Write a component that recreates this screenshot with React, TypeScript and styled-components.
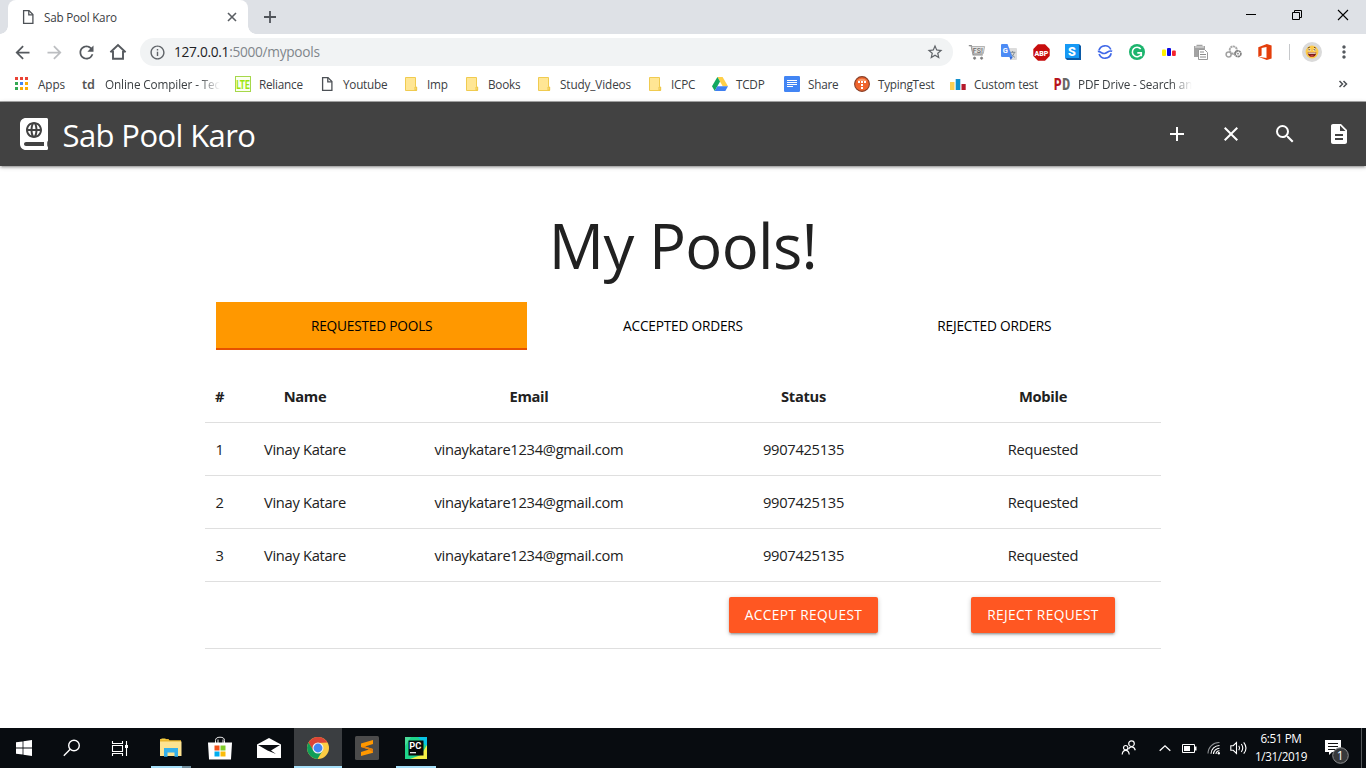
import React from "react";
import styled, { createGlobalStyle, css } from "styled-components";
import { MdAdd, MdArrowBack, MdArrowForward, MdClose, MdDescription, MdInfoOutline, MdMoreVert, MdRefresh, MdSearch, MdStarBorder } from "react-icons/md";
import { FaAtlas } from "react-icons/fa";

const GlobalStyle = createGlobalStyle`
  * { box-sizing: border-box; }
  body { margin: 0; background: #fff; font-family: "Open Sans", "Noto Sans", sans-serif; overflow: hidden; }
  svg { display: block; flex: none; overflow: visible; }
`;

const Screen = styled.div`
  width: 1366px;
  height: 768px;
  display: flex;
  flex-direction: column;
  overflow: hidden;
`;

/* ---------- browser chrome ---------- */

const TabStrip = styled.div`
  height: 34px;
  background: #dee1e6;
  display: flex;
  align-items: flex-start;
  padding-left: 8px;
  flex: none;
`;

const BrowserTab = styled.div`
  position: relative;
  width: 240px;
  height: 34px;
  background: #fff;
  border-radius: 8px 8px 0 0;
  display: flex;
  align-items: center;
  padding: 0 10px 0 12px;
  color: #3c4043;
  font-size: 11.7px;
  letter-spacing: -0.22px;
  &::before, &::after {
    content: "";
    position: absolute;
    bottom: 0;
    width: 8px;
    height: 8px;
  }
  &::before { left: -8px; background: radial-gradient(circle at 0 0, transparent 7.5px, #fff 8px); }
  &::after { right: -8px; background: radial-gradient(circle at 100% 0, transparent 7.5px, #fff 8px); }
`;

const TabTitle = styled.span`
  flex: 1;
  margin: -1px 0 0 8px;
  line-height: 16px;
`;

const NewTab = styled.div`
  margin: 10px 0 0 15px;
`;

const WindowButtons = styled.div`
  margin-left: auto;
  display: flex;
  height: 29px;
`;

const WindowButton = styled.div`
  width: 46px;
  display: flex;
  align-items: center;
  justify-content: center;
`;

const Toolbar = styled.div`
  height: 36px;
  flex: none;
  display: flex;
  align-items: center;
  padding: 0 6px;
  background: #fff;
`;

const ToolButton = styled.div<{ $faded?: boolean }>`
  width: 32px;
  height: 28px;
  display: flex;
  align-items: center;
  justify-content: center;
  color: ${(p) => (p.$faded ? "#bcbec1" : "#55595e")};
`;

const Omnibox = styled.div`
  margin-left: 6px;
  width: 813px;
  height: 28px;
  border-radius: 14px;
  background: #f1f3f4;
  display: flex;
  align-items: center;
  padding: 0 9px 0 9px;
  color: #5f6368;
`;

const Url = styled.div`
  flex: 1;
  margin-left: 8px;
  font-size: 13.7px;
  letter-spacing: -0.29px;
  line-height: 20px;
  color: #80868b;
  b { font-weight: 400; color: #202124; }
`;

const Extensions = styled.div`
  display: flex;
  align-items: center;
  margin-left: 8px;
`;

const ToolbarRule = styled.div`
  width: 1px;
  height: 16px;
  margin: 0 8px 0 8px;
  background: #c6c8cb;
`;

const Avatar = styled.div`
  width: 20px;
  height: 20px;
  margin: 0 6px 0 4px;
  border-radius: 50%;
  background: #dadada;
  display: flex;
  align-items: center;
  justify-content: center;
`;

const Bookmarks = styled.div`
  height: 32px;
  flex: none;
  display: flex;
  align-items: flex-start;
  padding: 6px 18px 0 14px;
  border-bottom: 1px solid #a9a9a9;
  color: #3c4043;
`;

const Bookmark = styled.div<{ $w: number }>`
  width: ${(p) => p.$w}px;
  height: 16px;
  display: flex;
  align-items: center;
  gap: 8px;
`;

const BookmarkLabel = styled.span<{ $fade?: number; $track?: number }>`
  margin-top: -1px;
  font-size: 11.75px;
  letter-spacing: ${(p) => p.$track ?? -0.25}px;
  line-height: 16px;
  white-space: nowrap;
  ${(p) =>
    p.$fade &&
    css`
      width: ${p.$fade}px;
      mask-image: linear-gradient(to right, #000 82%, transparent 100%);
    `}
`;

const Overflow = styled.div`
  margin-left: auto;
`;

/* ---------- page ---------- */

const Navbar = styled.nav`
  position: relative;
  height: 64px;
  flex: none;
  background: #424242;
  color: #fff;
  display: flex;
  align-items: center;
  padding: 0 15px 0 20px;
  box-shadow: 0 2px 2px 0 rgba(0, 0, 0, 0.14), 0 3px 1px -2px rgba(0, 0, 0, 0.12), 0 1px 5px 0 rgba(0, 0, 0, 0.2);
`;

const AtlasIcon = styled(FaAtlas)`
  width: 28px;
  height: 32px;
`;

const Brand = styled.div`
  display: flex;
  align-items: center;
  font-size: 31px;
  letter-spacing: -0.6px;
  line-height: 64px;
  span { margin: 1px 0 0 14.5px; }
`;

const NavActions = styled.div`
  margin-left: auto;
  display: flex;
  gap: 30px;
`;

const Main = styled.main`
  flex: 1;
  width: 956px;
  margin: 0 auto;
  padding-top: 38px;
  color: #212121;
`;

const Title = styled.h1`
  margin: 0;
  height: 98px;
  text-align: center;
  font-size: 61.5px;
  font-weight: 400;
  letter-spacing: -0.65px;
  line-height: 82px;
`;

const Tabs = styled.div`
  display: grid;
  grid-template-columns: repeat(3, 1fr);
  height: 48px;
  margin: 0 11px;
`;

const Tab = styled.div<{ $active?: boolean }>`
  height: 48px;
  line-height: 48px;
  text-align: center;
  font-size: 13.7px;
  letter-spacing: -0.21px;
  color: #000;
  background: ${(p) => (p.$active ? "#ff9800" : "transparent")};
  box-shadow: ${(p) => (p.$active ? "inset 0 -2px #e65100" : "none")};
`;

const Table = styled.div`
  margin-top: 20px;
`;

const Row = styled.div<{ $head?: boolean; $h?: number }>`
  height: ${(p) => p.$h ?? 53}px;
  display: grid;
  grid-template-columns: 29px 142px 306px 243px 236px;
  align-items: center;
  justify-items: center;
  border-bottom: 1px solid #dfdfdf;
  font-size: 14.7px;
  font-weight: ${(p) => (p.$head ? 700 : 400)};
  letter-spacing: -0.3px;
  line-height: 22px;
`;

const ActionButton = styled.button`
  height: 36px;
  padding: 0 16px;
  border: 0;
  border-radius: 2px;
  background: #ff5722;
  color: #fff;
  font: 400 13.7px/36px "Open Sans", "Noto Sans", sans-serif;
  letter-spacing: 0.37px;
  white-space: nowrap;
  box-shadow: 0 2px 2px 0 rgba(0, 0, 0, 0.14), 0 3px 1px -2px rgba(0, 0, 0, 0.12), 0 1px 5px 0 rgba(0, 0, 0, 0.2);
`;

/* ---------- taskbar ---------- */

const Taskbar = styled.div`
  height: 40px;
  flex: none;
  display: flex;
  background: #080c10;
  color: #fff;
`;

const TaskGroup = styled.div<{ $gap?: number; $left?: number }>`
  display: flex;
  gap: ${(p) => p.$gap ?? 0}px;
  margin-left: ${(p) => p.$left ?? 0}px;
`;

const Task = styled.div<{ $focused?: boolean; $bar?: string }>`
  width: 48px;
  height: 40px;
  display: flex;
  align-items: center;
  justify-content: center;
  background: ${(p) => (p.$focused ? "#3b3e41" : "transparent")};
  ${(p) =>
    p.$bar &&
    css`
      background-image: ${p.$bar};
      background-size: ${p.$focused ? "48px" : "40px"} 2px;
      background-position: center bottom;
      background-repeat: no-repeat;
    `}
`;

const Tray = styled.div`
  margin-left: auto;
  display: flex;
  align-items: center;
`;

const TraySlot = styled.div<{ $w: number }>`
  width: ${(p) => p.$w}px;
  display: flex;
  justify-content: center;
`;

const BadgeSlot = styled(TraySlot)`
  padding: 6px 0 0 1px;
`;

const Clock = styled.div`
  width: 60px;
  height: 38px;
  text-align: center;
  font-size: 11.7px;
  letter-spacing: -0.38px;
  line-height: 18px;
`;

const ShowDesktop = styled.div`
  width: 5px;
  height: 40px;
  border-left: 1px solid #53575a;
`;

/* ---------- icons ---------- */

const PageIcon = () => (
  <svg width="16" height="16" viewBox="0 0 16 16" fill="none" stroke="#4d5156" strokeWidth="1.3">
    <path d="M3.6 1.6H9l3.9 4v8.8H3.6z" />
    <path d="M8.8 1.8v4h4" />
  </svg>
);

const HomeIcon = () => (
  <svg width="18" height="18" viewBox="0 0 18 18" fill="none" stroke="currentColor" strokeWidth="1.9">
    <path d="M1.4 9.3 9 2l7.6 7.3M4 8v7.8h10V8" />
  </svg>
);

const FolderIcon = () => (
  <svg width="16" height="16" viewBox="0 0 16 16">
    <path d="M2.5 1.5h10v9l1 1v3h-11z" fill="#ffe694" stroke="#f0cb50" />
    <path d="M12 14v-3h1.7v3.3z" fill="#ffe694" stroke="#ecc33d" strokeWidth=".9" />
  </svg>
);

const AppsIcon = () => (
  <svg width="16" height="16" viewBox="0 0 16 16">
    {["#ea4335", "#ea4335", "#ea4335", "#34a853", "#4285f4", "#fbac05", "#34a853", "#fbac05", "#fbac05"].map((c, i) => (
      <rect key={i} x={1 + (i % 3) * 5} y={1 + Math.floor(i / 3) * 5} width="3" height="3" fill={c} />
    ))}
  </svg>
);

const TdIcon = () => (
  <svg width="16" height="16" viewBox="0 0 16 16">
    <text x="1" y="13" fontFamily="Noto Sans, sans-serif" fontWeight="600" fontSize="13" textLength="13" lengthAdjust="spacingAndGlyphs" fill="#555">td</text>
  </svg>
);

const LteIcon = () => (
  <svg width="16" height="16" viewBox="0 0 16 16">
    <rect x=".5" y=".5" width="15" height="15" fill="#fbfff0" stroke="#a6d84a" />
    <text x="1.2" y="12.8" fontFamily="Roboto, sans-serif" fontWeight="700" fontSize="13" textLength="13.6" lengthAdjust="spacingAndGlyphs" fill="#9be50c">LTE</text>
  </svg>
);

const DriveIcon = () => (
  <svg width="16" height="16" viewBox="0 0 16 16">
    <path d="M5.4 1h5.2L16 10.2h-5.3z" fill="#ffcf48" />
    <path d="M5.4 1 8 5.6 2.7 14.9 0 10.2z" fill="#11a861" />
    <path d="M5.3 10.2H16l-2.7 4.7H2.7z" fill="#3f7ff0" />
  </svg>
);

const DocsIcon = () => (
  <svg width="16" height="16" viewBox="0 0 16 16">
    <rect width="16" height="16" rx="1.2" fill="#4285f4" />
    <path d="M3 4.5h10M3 6.5h10M3 8.5h10M3 10.5h6" stroke="#fff" />
  </svg>
);

const TypingIcon = () => (
  <svg width="16" height="16" viewBox="0 0 16 16">
    <circle cx="8" cy="8" r="7.4" fill="#f0642c" stroke="#86402a" strokeWidth="1.1" />
    <path d="M3 5a6 5 0 0 1 10 0z" fill="#f89a6a" />
    <path d="M4 5h2v2H4zM7 5h2v2H7zM10 5h2v2h-2zM7 8h2v2H7zM7 11h2v2H7z" fill="#fff" />
  </svg>
);

const BarsIcon = () => (
  <svg width="16" height="16" viewBox="0 0 16 16">
    <rect y="6" width="4.5" height="8" fill="#ffcf52" />
    <rect x="5.7" y="3" width="4.6" height="11" fill="#1290cc" />
    <rect x="11.5" y="8" width="4.2" height="6" fill="#b51a2b" />
  </svg>
);

const PdIcon = () => (
  <svg width="16" height="16" viewBox="0 0 16 16" fontFamily="Roboto, sans-serif" fontWeight="900" fontSize="16">
    <text x="0" y="13.8" textLength="7.6" lengthAdjust="spacingAndGlyphs" fill="#b8141e">P</text>
    <text x="8.2" y="13.8" textLength="7.8" lengthAdjust="spacingAndGlyphs" fill="#666">D</text>
  </svg>
);

const CartIcon = () => (
  <svg width="18" height="18" viewBox="0 0 18 18" fill="none" stroke="#8d8d8d">
    <path d="M.8 2.6h2.4l2 9.3h9.6" strokeWidth="1.4" />
    <path d="M3.6 3.5h13l-1.3 7H5z" fill="#e2e2e2" stroke="#a5a5a5" strokeWidth=".8" />
    <text x="4.8" y="9.7" fontFamily="Roboto, sans-serif" fontSize="7" fontWeight="500" textLength="10" lengthAdjust="spacingAndGlyphs" fill="#6c6c6c" stroke="none">FS!</text>
    <circle cx="6.6" cy="15.2" r="1.1" fill="#777" />
    <circle cx="13.6" cy="15.2" r="1.1" fill="#777" />
  </svg>
);

const TranslateIcon = () => (
  <svg width="16" height="16" viewBox="0 0 16 16">
    <path d="M6.5 4H15q1 0 1 1v10q0 1-1 1H9.8z" fill="#dcdcdc" />
    <path d="M8.8 8.3h5.6M11.6 7v1.3M9.6 13.4c2-1 3.3-2.7 3.7-5M10.2 9.6c.7 1.7 2 2.9 3.7 3.7" fill="none" stroke="#7b8790" strokeWidth=".9" />
    <path d="M9.7 16 8.4 12.8h3.5z" fill="#3367d6" />
    <path d="M1 0h5.5l4.8 12.9H1q-1 0-1-1V1q0-1 1-1z" fill="#4c8bf5" />
    <text x="1.7" y="9" fontFamily="Roboto, sans-serif" fontWeight="700" fontSize="7.5" fill="#fff">G</text>
  </svg>
);

const AbpIcon = () => (
  <svg width="17" height="17" viewBox="0 0 17 17">
    <path d="M5 .3h7L16.7 5v7L12 16.7H5L.3 12V5z" fill="#c70d0d" />
    <text x="1.6" y="11.5" fontFamily="Roboto, sans-serif" fontWeight="900" fontSize="8" textLength="13.8" lengthAdjust="spacingAndGlyphs" fill="#fff">ABP</text>
  </svg>
);

const SIcon = () => (
  <svg width="16" height="16" viewBox="0 0 16 16">
    <path d="M0 0h14l2 2v14H2l-2-2z" fill="#0b5aa6" />
    <rect width="14" height="14" fill="#1699f5" />
    <text x="3" y="11.5" fontFamily="Roboto, sans-serif" fontWeight="900" fontSize="12.5" fill="#fff">S</text>
  </svg>
);

const WaveIcon = () => (
  <svg width="16" height="16" viewBox="0 0 16 16" fill="none" stroke="#4169e8" strokeWidth="1.7">
    <path d="M2 6.3A6.3 6.3 0 0 1 13.8 5.5M14.2 9.3A6.3 6.3 0 0 1 2.1 10" />
    <path d="M.8 7.4C3.3 7 4.8 9.8 7.5 9.5S11.5 6 15.2 7.2" />
  </svg>
);

const GrammarlyIcon = () => (
  <svg width="16" height="16" viewBox="0 0 16 16">
    <circle cx="8" cy="8" r="8" fill="#1cb46d" />
    <path d="M11.7 5A4.7 4.7 0 1 0 12.3 10M8.3 8.9h4v3.3" fill="none" stroke="#fff" strokeWidth="1.6" />
  </svg>
);

const PillsIcon = () => (
  <svg width="16" height="16" viewBox="0 0 16 16">
    <rect x="1" y="5.5" width="4" height="6.5" rx="1" fill="#fff000" />
    <rect x="6" y="4" width="4" height="8" rx="1" fill="#0d08e6" />
    <rect x="11" y="6.5" width="3.8" height="5.5" rx="1" fill="#f5222d" />
  </svg>
);

const ClipboardIcon = () => (
  <svg width="16" height="16" viewBox="0 0 16 16">
    <path d="M1 2h2.5V.7h6V2H12v11H1z" fill="#a3a3a3" />
    <path d="M2 3h9" stroke="#e8e8e8" />
    <path d="M5.5 5.5h6l3 3v7h-9z" fill="#fff" stroke="#999" />
    <path d="M7 8h4M7 10.5h6M7 13h6" stroke="#8c8c8c" />
  </svg>
);

const GearsIcon = () => (
  <svg width="17" height="16" viewBox="0 0 17 16" fill="none">
    <circle cx="3.6" cy="10.5" r="2.5" stroke="#a2a2a2" strokeWidth="1.5" />
    <circle cx="8.3" cy="6" r="3.6" stroke="#a8a8a8" strokeWidth="1.9" strokeDasharray="2.2 .5" />
    <circle cx="13" cy="9.7" r="2.9" stroke="#808080" strokeWidth="1.7" strokeDasharray="2 .4" />
    <circle cx="13" cy="9.7" r=".9" fill="#888" />
    <path d="M6 10c2-.4 3 .4 4.3 1.8" stroke="#999" />
  </svg>
);

const OfficeIcon = () => (
  <svg width="16" height="16" viewBox="0 0 16 16">
    <path d="M1.3 3.2 9.8 0l4.8 1.4v13.2L9.8 16l-8.5-3.2 8.2 1.1V2.9L4.6 4.1v7.5l-3.3 1.3z" fill="#e43e0b" />
  </svg>
);

const FaceIcon = () => (
  <svg width="14" height="14" viewBox="0 0 14 14">
    <circle cx="7" cy="7" r="6.4" fill="#fcc949" />
    <circle cx="4.4" cy="4.7" r="1.5" fill="#fff3cf" />
    <circle cx="9.6" cy="4.7" r="1.5" fill="#fff3cf" />
    <path d="M3.3 4.8h2M8.6 4.6l2 .5M2.8 3l2-.8M9 2.3l1.8.8" stroke="#5b3413" strokeWidth=".9" />
    <path d="M2.7 7.6h8.6a4.3 4.3 0 0 1-8.6 0z" fill="#7d1f18" />
    <path d="M3.3 7.7h7.4v1H3.3z" fill="#fff" />
    <path d="M5 11a2.3 1.6 0 0 1 4 0 4.2 4.2 0 0 1-4 0z" fill="#ef5350" />
  </svg>
);

const WindowsIcon = () => (
  <svg width="16" height="16" viewBox="0 0 16 16" fill="#fff">
    <path d="M0 2.3 6.6 1.4v6.2H0zM7.4 1.3 16 0v7.6H7.4zM0 8.4h6.6v6.2L0 13.7zM7.4 8.4H16V16l-8.6-1.2z" />
  </svg>
);

const SearchIcon = () => (
  <svg width="18" height="18" viewBox="0 0 18 18" fill="none" stroke="#fff" strokeWidth="1.4">
    <circle cx="11" cy="6.5" r="5.3" />
    <path d="M7.2 10.3.8 16.8" />
  </svg>
);

const TaskViewIcon = () => (
  <svg width="18" height="17" viewBox="0 0 18 17" fill="none" stroke="#fff" strokeWidth="1.1">
    <path d="M1.5 1v2.5h10V1M1.5 16v-2.5h10V16M1.5 5.5h10v6h-10zM15.5 1v15" />
    <rect x="14" y="5" width="3" height="3" fill="#fff" stroke="none" />
  </svg>
);

const ExplorerIcon = () => (
  <svg width="22" height="20" viewBox="0 0 22 20">
    <path d="M0 1h8.5l1 1.2H21v3H0z" fill="#e9b52d" />
    <path d="M1.5.5h4v1.3h-4z" fill="#f9d94b" />
    <path d="M0 3.5h21.5V18H0z" fill="#fde391" />
    <path d="M4 10h14v8.8h-3.5v-4.3h-7v4.3H4z" fill="#35b0ea" />
  </svg>
);

const StoreIcon = () => (
  <svg width="24" height="24" viewBox="0 0 24 24">
    <path d="M7.5 7V4.5Q7.5 1.2 12 1.2t4.5 3.3V7M10 7V3.5M15 7V3.5" fill="none" stroke="#e7e7e7" />
    <path d="M0 6.5h24L23 23.5H1z" fill="#fff" />
    <path d="M6.5 9.5h5v5h-5z" fill="#f1511b" />
    <path d="M12.5 9.5h5v5h-5z" fill="#80cc28" />
    <path d="M6.5 15.5h5v5h-5z" fill="#00adef" />
    <path d="M12.5 15.5h5v5h-5z" fill="#fbbc09" />
  </svg>
);

const MailIcon = () => (
  <svg width="24" height="20" viewBox="0 0 24 20">
    <path d="M0 6.5 12 0l12 6.5V20H0z" fill="#fff" />
    <path d="M1 7h22L14 12.5l5 3.5-8.5-3.5z" fill="#0b0e12" />
  </svg>
);

const ChromeIcon = () => (
  <svg width="22" height="22" viewBox="0 0 22 22">
    <circle cx="11" cy="11" r="11" fill="#fccd43" />
    <path d="M1.5 5.5A11 11 0 0 1 20.5 5.5L11 6 6.2 13.8z" fill="#db4437" />
    <path d="M1.5 5.5A11 11 0 0 0 10.5 22L15.7 13.5 11 16 6.3 13.5z" fill="#0f9d58" />
    <circle cx="11" cy="11" r="5.5" fill="#f1f1f1" />
    <circle cx="11" cy="11" r="4.4" fill="#4285f4" />
  </svg>
);

const SublimeIcon = () => (
  <svg width="24" height="24" viewBox="0 0 24 24">
    <rect width="24" height="24" rx="1.5" fill="#4b4b4b" />
    <path d="M6 7.5 18 4v4l-8 2.4 8 2.6v3.7L6 20v-4l8-2.4L6 11z" fill="#ff9800" />
    <path d="m6 11 4-.6 8 2.6v3.5l-4-2.9z" fill="#e47d0a" />
  </svg>
);

const PyCharmIcon = () => (
  <svg width="22" height="22" viewBox="0 0 22 22">
    <rect width="22" height="22" fill="#1fd68b" />
    <path d="M13 0h9v10z" fill="#08c5e6" />
    <path d="M22 8v14H5l11-4z" fill="#f3ee45" />
    <path d="M0 0h6L0 9z" fill="#49dc99" />
    <rect x="3.5" y="3.5" width="15" height="15" fill="#080808" />
    <text x="4.3" y="11.8" fontFamily="Roboto, sans-serif" fontWeight="700" fontSize="9.5" textLength="12" lengthAdjust="spacingAndGlyphs" fill="#fff">PC</text>
    <path d="M5 15.7h6" stroke="#fff" strokeWidth="1.2" />
  </svg>
);

const PeopleIcon = () => (
  <svg width="16" height="16" viewBox="0 0 16 16" fill="none" stroke="#fff" strokeWidth="1.2">
    <circle cx="10.5" cy="3.7" r="2.8" />
    <path d="M7.5 9.2c1.3-3.2 5.5-3.2 6.8 1" />
    <circle cx="4.7" cy="7.7" r="2.2" />
    <path d="M1.2 14.5c.4-5.5 6.6-5.5 7 0" />
  </svg>
);

const CaretIcon = () => (
  <svg width="12" height="8" viewBox="0 0 12 8" fill="none" stroke="#fff" strokeWidth="1.3">
    <path d="m.7 6.8 5.3-5 5.3 5" />
  </svg>
);

const BatteryIcon = () => (
  <svg width="15" height="9" viewBox="0 0 15 9">
    <path d="M.5.5h12v8H.5z" fill="none" stroke="#fff" />
    <path d="M2 2h6v5H2zM13 2.5h1.5v4H13z" fill="#fff" />
  </svg>
);

const WifiIcon = () => (
  <svg width="14" height="14" viewBox="0 0 14 14" fill="none" strokeWidth="1.1">
    <path d="M1 12.5A11 11 0 0 1 12.5 1.5" stroke="#8f9295" />
    <path d="M4 12.8a8.5 8.5 0 0 1 8.5-8.3M6.5 13a6 6 0 0 1 6-5.7M9 13a3.5 3.5 0 0 1 3.5-3.2" stroke="#fff" />
    <circle cx="11.8" cy="12.3" r="1.2" fill="#fff" />
  </svg>
);

const VolumeIcon = () => (
  <svg width="18" height="14" viewBox="0 0 18 14" fill="none" stroke="#fff" strokeWidth="1.1">
    <path d="M.8 4.7h2.4L6.5 1.5v11L3.2 9.3H.8zM8.8 4.7q1.6 2.3 0 4.6M11.3 3q2.9 4 0 8M13.7 1.3q4.6 5.7 0 11.4" />
  </svg>
);

const NotificationIcon = () => (
  <svg width="26" height="26" viewBox="0 0 26 26">
    <path d="M1 2h16v12H8l-3 3v-3H1z" fill="#fff" />
    <path d="M4 5.5h10M4 8.5h10M4 11.5h8" stroke="#111" />
    <circle cx="16.5" cy="17.5" r="7.8" fill="#37393b" stroke="#8c8e90" />
    <text x="16.3" y="22" textAnchor="middle" fontFamily="Open Sans, sans-serif" fontSize="12" fill="#fff">1</text>
  </svg>
);

/* ---------- data ---------- */

const bookmarks: { icon: React.ReactNode; label: string; w: number; fade?: number; track?: number }[] = [
  { icon: <AppsIcon />, label: "Apps", w: 67, track: -0.1 },
  { icon: <TdIcon />, label: "Online Compiler - Tec", w: 154, fade: 115, track: -0.12 },
  { icon: <LteIcon />, label: "Reliance", w: 84 },
  { icon: <PageIcon />, label: "Youtube", w: 84 },
  { icon: <FolderIcon />, label: "Imp", w: 61 },
  { icon: <FolderIcon />, label: "Books", w: 72 },
  { icon: <FolderIcon />, label: "Study_Videos", w: 111, track: -0.12 },
  { icon: <FolderIcon />, label: "ICPC", w: 65 },
  { icon: <DriveIcon />, label: "TCDP", w: 72 },
  { icon: <DocsIcon />, label: "Share", w: 70 },
  { icon: <TypingIcon />, label: "TypingTest", w: 96 },
  { icon: <BarsIcon />, label: "Custom test", w: 104, track: -0.18 },
  { icon: <PdIcon />, label: "PDF Drive - Search an", w: 138, fade: 115, track: -0.15 },
];

const extensions = [CartIcon, TranslateIcon, AbpIcon, SIcon, WaveIcon, GrammarlyIcon, PillsIcon, ClipboardIcon, GearsIcon, OfficeIcon];

const pools = [1, 2, 3].map((id) => ({
  id,
  name: "Vinay Katare",
  email: "vinaykatare1234@gmail.com",
  status: "9907425135",
  mobile: "Requested",
}));

const runningBar = "linear-gradient(#a5dff9, #a5dff9)";

export default function App() {
  return (
    <Screen>
      <GlobalStyle />
      <TabStrip>
        <BrowserTab>
          <PageIcon />
          <TabTitle>Sab Pool Karo</TabTitle>
          <svg width="12" height="12" viewBox="0 0 12 12" stroke="#5a5e63" strokeWidth="1.6">
            <path d="m2 2 8 8M10 2l-8 8" />
          </svg>
        </BrowserTab>
        <NewTab>
          <svg width="14" height="14" viewBox="0 0 14 14" stroke="#50545a" strokeWidth="1.8">
            <path d="M7 1v12M1 7h12" />
          </svg>
        </NewTab>
        <WindowButtons>
          <WindowButton>
            <svg width="10" height="10" viewBox="0 0 10 10" stroke="#000">
              <path d="M0 4.5h10" />
            </svg>
          </WindowButton>
          <WindowButton>
            <svg width="10" height="10" viewBox="0 0 10 10" stroke="#000" fill="none">
              <path d="M.5 2.5h7v7h-7zM2.5 2.5v-2h7v7h-2" />
            </svg>
          </WindowButton>
          <WindowButton>
            <svg width="12" height="12" viewBox="0 0 12 12" stroke="#000" strokeWidth="1.1">
              <path d="m1 1 10 10M11 1 1 11" />
            </svg>
          </WindowButton>
        </WindowButtons>
      </TabStrip>
      <Toolbar>
        <ToolButton><MdArrowBack size={21} /></ToolButton>
        <ToolButton $faded><MdArrowForward size={21} /></ToolButton>
        <ToolButton><MdRefresh size={21} /></ToolButton>
        <ToolButton><HomeIcon /></ToolButton>
        <Omnibox>
          <MdInfoOutline size={17} />
          <Url><b>127.0.0.1</b>:5000/mypools</Url>
          <MdStarBorder size={18} />
        </Omnibox>
        <Extensions>
          {extensions.map((Icon, i) => (
            <ToolButton key={i}><Icon /></ToolButton>
          ))}
          <ToolbarRule />
          <Avatar><FaceIcon /></Avatar>
          <ToolButton><MdMoreVert size={20} /></ToolButton>
        </Extensions>
      </Toolbar>
      <Bookmarks>
        {bookmarks.map((b) => (
          <Bookmark key={b.label} $w={b.w}>
            {b.icon}
            <BookmarkLabel $fade={b.fade} $track={b.track}>{b.label}</BookmarkLabel>
          </Bookmark>
        ))}
        <Overflow>
          <svg width="10" height="16" viewBox="0 0 10 16" fill="none" stroke="#4d5156" strokeWidth="1.5">
            <path d="m1.5 5 3 3-3 3M5.5 5l3 3-3 3" />
          </svg>
        </Overflow>
      </Bookmarks>

      <Navbar>
        <Brand>
          <AtlasIcon />
          <span>Sab Pool Karo</span>
        </Brand>
        <NavActions>
          <MdAdd size={24} />
          <MdClose size={24} />
          <MdSearch size={24} />
          <MdDescription size={24} />
        </NavActions>
      </Navbar>

      <Main>
        <Title>My Pools!</Title>
        <Tabs>
          <Tab $active>REQUESTED POOLS</Tab>
          <Tab>ACCEPTED ORDERS</Tab>
          <Tab>REJECTED ORDERS</Tab>
        </Tabs>
        <Table>
          <Row $head>
            <span>#</span>
            <span>Name</span>
            <span>Email</span>
            <span>Status</span>
            <span>Mobile</span>
          </Row>
          {pools.map((p) => (
            <Row key={p.id}>
              <span>{p.id}</span>
              <span>{p.name}</span>
              <span>{p.email}</span>
              <span>{p.status}</span>
              <span>{p.mobile}</span>
            </Row>
          ))}
          <Row $h={67}>
            <span />
            <span />
            <span />
            <ActionButton>ACCEPT REQUEST</ActionButton>
            <ActionButton>REJECT REQUEST</ActionButton>
          </Row>
        </Table>
      </Main>

      <Taskbar>
        <TaskGroup>
          <Task><WindowsIcon /></Task>
          <Task><SearchIcon /></Task>
          <Task><TaskViewIcon /></Task>
        </TaskGroup>
        <TaskGroup $gap={1} $left={3}>
          <Task $bar="linear-gradient(to right, #a5dff9 31px, #6f8d9c 31px)"><ExplorerIcon /></Task>
          <Task><StoreIcon /></Task>
          <Task><MailIcon /></Task>
          <Task $focused $bar={runningBar}><ChromeIcon /></Task>
          <Task><SublimeIcon /></Task>
          <Task $bar={runningBar}><PyCharmIcon /></Task>
        </TaskGroup>
        <Tray>
          <TraySlot $w={46}><PeopleIcon /></TraySlot>
          <TraySlot $w={25}><CaretIcon /></TraySlot>
          <TraySlot $w={25}><BatteryIcon /></TraySlot>
          <TraySlot $w={24}><WifiIcon /></TraySlot>
          <TraySlot $w={25}><VolumeIcon /></TraySlot>
          <Clock>6:51 PM<br />1/31/2019</Clock>
          <BadgeSlot $w={50}><NotificationIcon /></BadgeSlot>
          <ShowDesktop />
        </Tray>
      </Taskbar>
    </Screen>
  );
}
